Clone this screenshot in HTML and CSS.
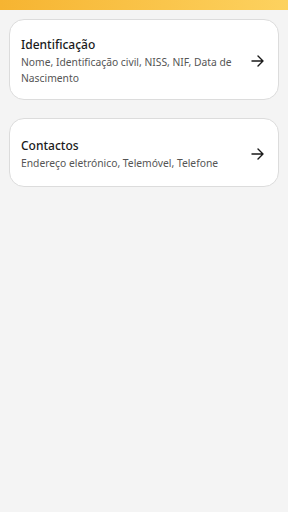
FILE: index.html
```html
<!DOCTYPE html>
<html lang="pt">
<head>
  <meta charset="UTF-8">
  <meta name="viewport" content="width=device-width, initial-scale=1.0">
  <title>Dados pessoais</title>
  <link rel="stylesheet" href="styles.css">
</head>
<body>
  <div class="top-bar"></div>
  <ul class="menu-list">
    <li class="menu-card">
      <div class="menu-text">
        <h2 class="menu-title">Identificação</h2>
        <p class="menu-desc">Nome, Identificação civil, NISS, NIF, Data de Nascimento</p>
      </div>
      <svg class="menu-arrow" width="14" height="14" viewBox="0 0 14 14">
        <path d="M1 7h11M7 2l5 5-5 5" fill="none" stroke="#1a1a1a" stroke-width="1.4" stroke-linecap="round" stroke-linejoin="round"/>
      </svg>
    </li>
    <li class="menu-card">
      <div class="menu-text">
        <h2 class="menu-title">Contactos</h2>
        <p class="menu-desc">Endereço eletrónico, Telemóvel, Telefone</p>
      </div>
      <svg class="menu-arrow" width="14" height="14" viewBox="0 0 14 14">
        <path d="M1 7h11M7 2l5 5-5 5" fill="none" stroke="#1a1a1a" stroke-width="1.4" stroke-linecap="round" stroke-linejoin="round"/>
      </svg>
    </li>
  </ul>
</body>
</html>
```
FILE: styles.css
```css
* {
  margin: 0;
  padding: 0;
  box-sizing: border-box;
}

body {
  background-color: #f4f4f4;
  font-family: "Noto Sans", "Open Sans", sans-serif;
  color: #1a1a1a;
}

.top-bar {
  height: 10px;
  background: linear-gradient(to right, #f6b431, #fdd25f);
}

.menu-list {
  list-style-type: none;
  padding: 9px 9px 0;
  display: flex;
  flex-direction: column;
  gap: 18px;
}

.menu-card {
  display: flex;
  align-items: center;
  gap: 10px;
  min-height: 69px;
  background-color: #fff;
  border: 1px solid #dcdcdc;
  border-radius: 15px;
  padding: 16px 13px 13px 11px;
}

.menu-text {
  flex: 1;
}

.menu-title {
  font-size: 12px;
  font-weight: 500;
  line-height: 17px;
  margin-bottom: 1px;
}

.menu-desc {
  font-size: 10.3px;
  line-height: 16px;
  color: #555;
}

.menu-arrow {
  flex-shrink: 0;
}
```
